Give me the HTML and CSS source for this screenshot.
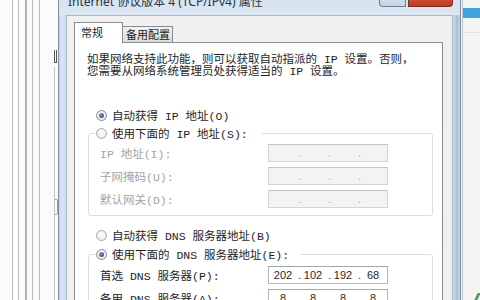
FILE: index.html
```html
<!DOCTYPE html>
<html>
<head>
<meta charset="utf-8">
<link rel="stylesheet" href="styles.css">
</head>
<body>
<div class="screen">
  <div class="desk-left">
    <span class="st"></span>
    <span class="st s2"></span>
    <span class="st s3"></span>
    <span class="st s4"></span>
    <span class="st s5"></span>
    <div class="st-edge">
      <span class="glyph-frag"></span>
      <span class="edge-line"><span class="edge-notch"></span></span>
    </div>
  </div>

  <div class="dialog">
    <div class="titlebar">
      <span class="title">Internet 协议版本 4 (TCP/IPv4) 属性</span>
      <div class="caption-btns">
        <span class="btn-help">?</span>
        <span class="btn-close">✕</span>
      </div>
    </div>
    <div class="body">
      <div class="tabs">
        <div class="tab active">常规</div>
        <div class="tab">备用配置</div>
      </div>
      <div class="panel">
        <p class="intro">如果网络支持此功能，则可以获取自动指派的 IP 设置。否则，<br>您需要从网络系统管理员处获得适当的 IP 设置。</p>

        <div class="radio-row first-radio"><span class="radio on"></span>自动获得 IP 地址(O)</div>
        <fieldset class="group">
          <legend class="radio-row legend-ip"><span class="radio"></span>使用下面的 IP 地址(S):</legend>
          <div class="frow disabled"><span class="lbl">IP 地址(I):</span>
            <span class="ip"><span class="seg"></span><span class="dot">.</span><span class="seg"></span><span class="dot">.</span><span class="seg"></span><span class="dot">.</span><span class="seg"></span></span></div>
          <div class="frow disabled"><span class="lbl">子网掩码(U):</span>
            <span class="ip"><span class="seg"></span><span class="dot">.</span><span class="seg"></span><span class="dot">.</span><span class="seg"></span><span class="dot">.</span><span class="seg"></span></span></div>
          <div class="frow disabled"><span class="lbl">默认网关(D):</span>
            <span class="ip"><span class="seg"></span><span class="dot">.</span><span class="seg"></span><span class="dot">.</span><span class="seg"></span><span class="dot">.</span><span class="seg"></span></span></div>
        </fieldset>

        <div class="radio-row dns-radio"><span class="radio"></span>自动获得 DNS 服务器地址(B)</div>
        <fieldset class="group dns-group">
          <legend class="radio-row legend-dns"><span class="radio on"></span>使用下面的 DNS 服务器地址(E):</legend>
          <div class="frow"><span class="lbl">首选 DNS 服务器(P):</span>
            <span class="ip on"><span class="seg">202</span><span class="dot">.</span><span class="seg">102</span><span class="dot">.</span><span class="seg">192</span><span class="dot">.</span><span class="seg">68</span></span></div>
          <div class="frow"><span class="lbl">备用 DNS 服务器(A):</span>
            <span class="ip on"><span class="seg">8</span><span class="dot">.</span><span class="seg">8</span><span class="dot">.</span><span class="seg">8</span><span class="dot">.</span><span class="seg">8</span></span></div>
        </fieldset>
      </div>
    </div>
  </div>

  <div class="desk-right">
    <div class="dr-line">
      <span class="dr-blue"></span>
      <span class="dr-rule"></span>
      <span class="dr-green"></span>
    </div>
  </div>
</div>
</body>
</html>
```

FILE: styles.css
```css
* { box-sizing: border-box; margin: 0; padding: 0; }
html, body { width: 480px; height: 300px; overflow: hidden; background: #f6f6f6; }
body {
  font-family: "Liberation Mono", "Noto Sans CJK SC", monospace;
  font-size: 11.5px;
  color: #222;
}
.screen { display: flex; width: 480px; height: 300px; overflow: hidden; }

/* left desktop remnants */
.desk-left { width: 58px; flex: none; display: flex; background: #fbfbfb; padding-left: 12px; }
.st { width: 1px; background: #bcbcbc; flex: none; }
.s2 { margin-left: 5px; }
.s3 { margin-left: 6px; width: 2px; background: #b4b4b4; }
.s4 { margin-left: 5px; }
.s5 { margin-left: 6px; }
.st-edge { margin-left: 14px; width: 3px; display: flex; flex-direction: column; }
.glyph-frag { margin-top: 50px; height: 13px; width: 3px; border-left: 1px solid #555; border-bottom: 1px solid #555; border-right: 1px solid #555; }
.edge-line { margin-top: 4px; flex: 1; border-left: 1px solid #c4c4c4; }
.edge-notch { display: block; margin-top: 132px; width: 3px; height: 16px; border: 1px solid #9a9a9a; border-left: none; border-radius: 0 2px 2px 0; }

/* dialog */
.dialog {
  width: 403px; flex: none; margin-top: -15px; height: 315px;
  display: flex; flex-direction: column;
  background: linear-gradient(90deg, #c2d5ea 0, #d9e6f3 3px, #cbdcee 7px, #dbe6f1 50%, #cbdcee calc(100% - 7px), #a9bfd9 calc(100% - 3px), #c2d5ea 100%);
  border-left: 1px solid #7d8fa3;
  border-right: 1px solid #7d8fa3;
}
.titlebar {
  height: 30px; flex: none; display: flex; justify-content: space-between;
  padding: 0 7px 0 9px;
  background: linear-gradient(#d0dfee, #dce7f2);
}
.title {
  padding-top: 9px; line-height: 16px;
  font-family: "Noto Sans", "Noto Sans CJK SC", sans-serif; font-size: 12px; color: #2a3440;
  white-space: nowrap;
}
.caption-btns { display: flex; align-items: flex-start; }
.btn-help {
  width: 27px; height: 22px; margin-right: 2px;
  border: 1px solid #6d7d90; border-top: none; border-radius: 0 0 0 4px;
  background: linear-gradient(#e9eff6, #c8d4e2);
  color: #fff; font: bold 11px/19px "Liberation Sans", sans-serif; text-align: center;
  text-shadow: 0 0 1px #56657a;
}
.btn-close {
  width: 45px; height: 22px;
  border: 1px solid #7b2f22; border-top: none; border-radius: 0 0 4px 0;
  background: linear-gradient(#e39a86, #cf5a40 50%, #c2381e);
  color: #fff; font: bold 11px/19px "DejaVu Sans", sans-serif; text-align: center;
}

.body {
  flex: 1; margin: 0 7px; background: #f0f0f0;
  border: 1px solid #a9b8c9; border-bottom: none;
  padding: 6px 9px 0 7px;
  display: flex; flex-direction: column;
}
.tabs { height: 20px; flex: none; display: flex; align-items: flex-end; font-family: "Noto Sans CJK SC", sans-serif; font-size: 11px; }
.tab {
  height: 16px; width: 50px; padding-left: 3px; line-height: 14px;
  border: 1px solid #898c95; border-left: none; border-bottom: none;
  background: linear-gradient(#f3f3f3, #dcdcdc);
  color: #222; white-space: nowrap;
}
.tab.active {
  width: 49px; height: 21px; padding: 2px 0 0 6px; line-height: 14px;
  border-left: 1px solid #898c95;
  background: #fff; margin-bottom: -1px; position: relative; z-index: 1;
}

.panel { flex: 1; background: #fff; border: 1px solid #898c95; padding: 11px 0 0 12px; }
.intro { line-height: 12px; white-space: nowrap; color: #1e1e1e; }

.radio-row { display: flex; align-items: center; gap: 5px; height: 16px; white-space: nowrap; color: #1e1e1e; }
.first-radio { margin: 29px 0 0 9px; }
.dns-radio { margin: 11px 0 0 9px; }
.radio {
  width: 11px; height: 11px; flex: none; border-radius: 50%;
  border: 1px solid #a9a9a9;
  background: radial-gradient(circle at 50% 40%, #fff, #e4e4e4);
  display: flex; align-items: center; justify-content: center;
}
.radio.on { border-color: #8a8a8a; }
.radio.on::after {
  content: ""; width: 5px; height: 5px; border-radius: 50%;
  background: radial-gradient(circle at 40% 35%, #7a9ccc, #1d3b6b);
}

.group {
  margin: 2px 0 0 1px; width: 345px;
  border: 1px solid #dadee2; border-radius: 3px;
  padding: 3px 0 7px 7px;
}
.dns-group { margin-top: 3px; padding-top: 4px; }
.group legend { padding: 0; background: #fff; }
.legend-ip { width: 166px; }
.legend-dns { width: 204px; }

.frow { display: grid; grid-template-columns: 168px 120px; align-items: center; height: 18px; padding-left: 4px; margin-top: 5px; }
.group legend + .frow { margin-top: 0; }
.lbl { white-space: nowrap; color: #1e1e1e; }
.disabled .lbl { color: #a4a4a4; }

.ip {
  height: 18px; display: flex; padding-left: 2px;
  border: 1px solid #d3d3d3; border-top-color: #c4c4c4;
  background: #f3f3f3;
  font-family: "Liberation Sans", sans-serif; font-size: 11px; line-height: 16px; color: #a0a0a0;
}
.ip.on { background: #fff; border-color: #b5b8bf; border-top-color: #a2a5ab; color: #2a2a2a; }
.seg { width: 24px; text-align: center; }
.dot { width: 6px; text-align: right; }

/* right desktop remnants */
.desk-right { width: 19px; flex: none; padding-left: 1px; background: #f4f4f2; }
.dr-line { height: 100%; border-left: 1px solid #c2c2c2; display: flex; flex-direction: column; }
.dr-blue { margin-top: 8px; height: 10px; background: #3fa3e4; }
.dr-rule { margin-top: 14px; height: 1px; background: #e2e2e2; }
.dr-green { margin: auto 0 0 13px; width: 3px; height: 7px; background: #4e9a5a; transform: skewX(-25deg); }
```
